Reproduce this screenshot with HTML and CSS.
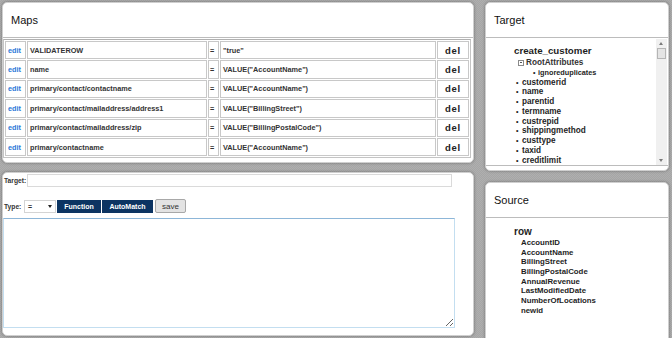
FILE: index.html
```html
<!DOCTYPE html>
<html lang="en">
<head>
    <meta charset="UTF-8">
    <title>Mapping Editor</title>
    <link rel="stylesheet" href="styles.css">
</head>
<body>
    <div class="layout">
        <div class="col-left">
            <section class="panel maps">
                <div class="panel-head">Maps</div>
                <table class="map-table">
                    <tr>
                        <td class="c-edit"><a href="#">edit</a></td>
                        <td class="c-path">VALIDATEROW</td>
                        <td class="c-eq">=</td>
                        <td class="c-val">"true"</td>
                        <td class="c-del">del</td>
                    </tr>
                    <tr>
                        <td class="c-edit"><a href="#">edit</a></td>
                        <td class="c-path">name</td>
                        <td class="c-eq">=</td>
                        <td class="c-val">VALUE("AccountName")</td>
                        <td class="c-del">del</td>
                    </tr>
                    <tr>
                        <td class="c-edit"><a href="#">edit</a></td>
                        <td class="c-path">primary/contact/contactname</td>
                        <td class="c-eq">=</td>
                        <td class="c-val">VALUE("AccountName")</td>
                        <td class="c-del">del</td>
                    </tr>
                    <tr>
                        <td class="c-edit"><a href="#">edit</a></td>
                        <td class="c-path">primary/contact/mailaddress/address1</td>
                        <td class="c-eq">=</td>
                        <td class="c-val">VALUE("BillingStreet")</td>
                        <td class="c-del">del</td>
                    </tr>
                    <tr>
                        <td class="c-edit"><a href="#">edit</a></td>
                        <td class="c-path">primary/contact/mailaddress/zip</td>
                        <td class="c-eq">=</td>
                        <td class="c-val">VALUE("BillingPostalCode")</td>
                        <td class="c-del">del</td>
                    </tr>
                    <tr>
                        <td class="c-edit"><a href="#">edit</a></td>
                        <td class="c-path">primary/contactname</td>
                        <td class="c-eq">=</td>
                        <td class="c-val">VALUE("AccountName")</td>
                        <td class="c-del">del</td>
                    </tr>
                </table>
            </section>

            <section class="panel editor">
                <div class="target-row">
                    <label class="field-label" for="target">Target:</label>
                    <input class="target-input" id="target" type="text">
                </div>
                <div class="type-row">
                    <label class="field-label">Type:</label>
                    <div class="type-select"><span>=</span><span class="caret"></span></div>
                    <button class="btn-dark btn-function">Function</button>
                    <button class="btn-dark btn-auto">AutoMatch</button>
                    <button class="btn-save">save</button>
                </div>
                <textarea class="expr"></textarea>
            </section>
        </div>

        <div class="col-right">
            <section class="panel target">
                <div class="panel-head">Target</div>
                <div class="tree-box">
                    <div class="tree">
                        <div class="tree-title">create_customer</div>
                        <div class="tree-group"><span class="toggle"></span>RootAttributes</div>
                        <div class="tree-sub"><span class="dot">&bull;</span>ignoreduplicates</div>
                        <div class="tree-item"><span class="dot">&bull;</span>customerid</div>
                        <div class="tree-item"><span class="dot">&bull;</span>name</div>
                        <div class="tree-item"><span class="dot">&bull;</span>parentid</div>
                        <div class="tree-item"><span class="dot">&bull;</span>termname</div>
                        <div class="tree-item"><span class="dot">&bull;</span>custrepid</div>
                        <div class="tree-item"><span class="dot">&bull;</span>shippingmethod</div>
                        <div class="tree-item"><span class="dot">&bull;</span>custtype</div>
                        <div class="tree-item"><span class="dot">&bull;</span>taxid</div>
                        <div class="tree-item"><span class="dot">&bull;</span>creditlimit</div>
                        <div class="tree-item"><span class="dot">&bull;</span>creditlimitonhold</div>
                    </div>
                    <div class="scrollbar">
                        <span class="arrow up"></span>
                        <span class="thumb"></span>
                        <span class="track"></span>
                        <span class="arrow down"></span>
                    </div>
                </div>
            </section>

            <section class="panel source">
                <div class="panel-head">Source</div>
                <div class="source-list">
                    <div class="source-root">row</div>
                    <div class="source-item">AccountID</div>
                    <div class="source-item">AccountName</div>
                    <div class="source-item">BillingStreet</div>
                    <div class="source-item">BillingPostalCode</div>
                    <div class="source-item">AnnualRevenue</div>
                    <div class="source-item">LastModifiedDate</div>
                    <div class="source-item">NumberOfLocations</div>
                    <div class="source-item">newid</div>
                </div>
            </section>
        </div>
    </div>
</body>
</html>
```

FILE: styles.css
```css
* {
    margin: 0;
    padding: 0;
    box-sizing: border-box;
    font-family: 'Liberation Sans', Arial, sans-serif;
}

body {
    height: 338px;
    overflow: hidden;
    background-color: #aaaaaa;
    background-image: repeating-conic-gradient(#a6a6a6 0 25%, #afafaf 0 50%);
    background-size: 2px 2px;
}

.layout {
    display: flex;
    gap: 11px;
    padding: 2px 0 0 2px;
}

.col-left {
    width: 472px;
    display: flex;
    flex-direction: column;
    gap: 9px;
}

.col-right {
    width: 184px;
    display: flex;
    flex-direction: column;
    gap: 11px;
}

.panel {
    background-color: #ffffff;
    border: 1px solid #cfcfcf;
    border-radius: 5px;
    box-shadow: 0 0 3px rgba(0, 0, 0, 0.35);
    overflow: hidden;
}

.panel-head {
    height: 35px;
    line-height: 35px;
    padding-left: 8px;
    font-size: 11px;
    color: #111111;
    border-bottom: 1px solid #bcbcbc;
}

/* Maps table */

.maps {
    height: 161px;
}

.map-table {
    width: 468px;
    table-layout: fixed;
    border-collapse: separate;
    border-spacing: 1px;
    border: 1px solid #c4c4c4;
    border-top-color: #b0b0b0;
    margin-top: 1px;
}

.map-table td {
    height: 18.4px;
    padding: 0 2px;
    border: 1px solid #c8c8c8;
    font-size: 7.3px;
    font-weight: bold;
    color: #333333;
    white-space: nowrap;
    overflow: hidden;
}

.c-edit {
    width: 21px;
}

.c-edit a {
    color: #2b78d8;
    text-decoration: none;
    font-size: 7.3px;
}

.c-path {
    width: 180px;
}

.c-eq {
    width: 11px;
}

.map-table .c-eq {
    padding: 0 1px;
}

.map-table .c-del {
    width: 32px;
    text-align: center;
    font-size: 9.5px;
    letter-spacing: 0.7px;
    color: #222222;
}

/* Editor */

.editor {
    height: 164px;
    padding-top: 1px;
}

.target-row {
    display: flex;
    align-items: center;
    height: 13px;
    padding-left: 1px;
}

.field-label {
    font-size: 6.7px;
    font-weight: bold;
    color: #333333;
}

.target-row .field-label {
    width: 23px;
}

.target-input {
    width: 425px;
    height: 13px;
    border: 1px solid #dadada;
    outline: none;
}

.type-row {
    display: flex;
    align-items: center;
    height: 14px;
    margin-top: 12px;
    padding-left: 1px;
}

.type-row .field-label {
    width: 20px;
}

.type-select {
    width: 32px;
    height: 13px;
    display: flex;
    align-items: center;
    justify-content: space-between;
    padding: 0 3px 0 3px;
    border: 1px solid #d4d4d4;
    font-size: 7px;
    font-weight: bold;
    color: #333333;
}

.caret {
    width: 0;
    height: 0;
    border-left: 2.5px solid transparent;
    border-right: 2.5px solid transparent;
    border-top: 3px solid #222222;
}

.btn-dark {
    height: 13px;
    margin-left: 1px;
    border: none;
    background-color: #0c3462;
    color: #ffffff;
    font-size: 7px;
    font-weight: bold;
    cursor: pointer;
}

.btn-function {
    width: 44px;
}

.btn-auto {
    width: 51px;
}

.btn-save {
    width: 31px;
    height: 14px;
    margin-left: 2px;
    border: 1px solid #a8a8a8;
    border-radius: 2px;
    background-color: #e3e3e3;
    color: #333333;
    font-size: 8px;
    cursor: pointer;
}

.expr {
    display: block;
    width: 452px;
    height: 110px;
    margin-top: 5px;
    border: 1px solid #c3def0;
    border-top-color: #8db6d8;
    outline: none;
}

/* Target tree */

.target {
    height: 169px;
}

.tree-box {
    display: flex;
    height: 128px;
    border-bottom: 1px solid #bcbcbc;
}

.tree {
    flex: 1;
    padding: 7px 0 0 28px;
    overflow: hidden;
    color: #1e1e1e;
    font-weight: bold;
}

.tree-title {
    height: 12px;
    line-height: 12px;
    font-size: 9.7px;
}

.tree-group {
    display: flex;
    align-items: center;
    height: 11px;
    padding-left: 4px;
    font-size: 8.2px;
    color: #333333;
}

.toggle {
    position: relative;
    width: 6px;
    height: 6px;
    margin-right: 2px;
    border: 1px solid #8a8a8a;
}

.toggle::after {
    content: "";
    position: absolute;
    left: 1px;
    right: 1px;
    top: 1.5px;
    height: 1px;
    background-color: #555555;
}

.tree-sub {
    height: 9.5px;
    line-height: 9.5px;
    padding-left: 19px;
    font-size: 7.3px;
}

.tree-item {
    height: 9.75px;
    line-height: 9.75px;
    padding-left: 2px;
    font-size: 8.2px;
}

.dot {
    display: inline-block;
    width: 6px;
    font-size: 7px;
}

.tree-sub .dot {
    width: 5px;
}

.scrollbar {
    width: 11px;
    margin: 1px 1px 0 0;
    display: flex;
    flex-direction: column;
    background-color: #f0f0f0;
}

.arrow {
    height: 9px;
    position: relative;
}

.arrow::after {
    content: "";
    position: absolute;
    left: 3px;
    top: 3px;
    border-left: 2.5px solid transparent;
    border-right: 2.5px solid transparent;
}

.arrow.up::after {
    border-bottom: 3px solid #7a7a7a;
}

.arrow.down::after {
    border-top: 3px solid #7a7a7a;
}

.thumb {
    height: 11px;
    margin: 0 1px;
    background-color: #e4e4e4;
    border: 1px solid #b5b5b5;
}

.track {
    flex: 1;
}

/* Source list */

.source {
    height: 170px;
}

.source-list {
    padding: 8px 0 0 28px;
    color: #1e1e1e;
    font-weight: bold;
}

.source-root {
    height: 12px;
    line-height: 12px;
    font-size: 10px;
}

.source-item {
    height: 9.7px;
    line-height: 9.7px;
    padding-left: 7px;
    font-size: 7.8px;
}
```
